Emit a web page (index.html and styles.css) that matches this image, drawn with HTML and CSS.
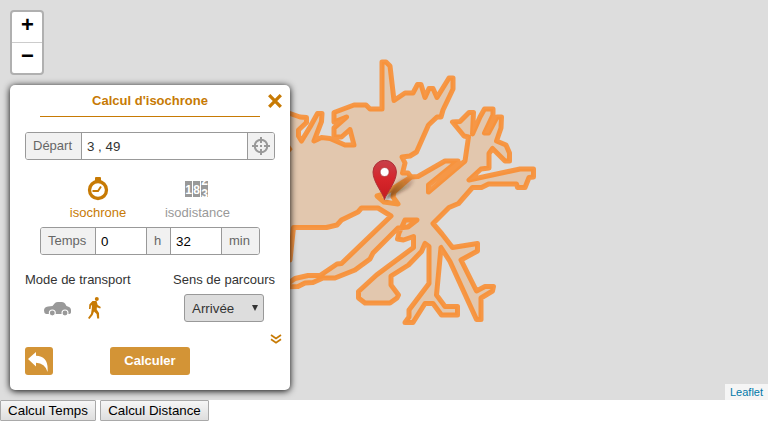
FILE: index.html
```html
<!DOCTYPE html>
<html lang="fr">
<head>
<meta charset="utf-8">
<title>Calcul d'isochrone</title>
<link rel="stylesheet" href="styles.css">
</head>
<body>
<main class="map">
  <svg class="overlay" width="768" height="400" viewBox="0 0 768 400">
    <path class="zone" d="M280 113 L290 113.500 300 117 306.500 117.500 306.500 122.500 298.500 130 298.500 136 301.500 141 310 127 317.500 113.500 322 113.500 321.500 121.500 314 141 321.500 137.500 330 138.500 345 145 354 145 350 129.500 341.500 137 334 137 334 128 346.500 117 334 122 334 112.500 354 105 366 105 370 109 382 109 382 62 386 62 390 66 394 100.500 405 93 413 93 417.500 84.500 421 84.500 425 97.500 429 88.500 433 88.500 437 97.500 449 78 453 78 453 89 443 110 441 117 437 117 428.500 125 416.500 152 410 156 402 157 405 163 402.500 173 408 173 411 177 418 176.500 445 161 458 161 428.500 185 428.500 192 465 161 468.500 137 464 136 452.500 122 460 121.500 469 112.500 473.500 112.500 472.500 134 480 117 484.500 109 493 109 493 115 484.500 133 488.500 133 497 117 501.500 117 501 128 496.500 141 506 145 509.500 153 509.500 161 505 161 492.500 148.500 489 153.500 489 168 481 169 469 180 520 169 533.500 169 533.500 177 529 177.500 525 187.500 517.500 187.500 516.500 184 488.500 184 481.500 187.500 472.500 187.500 458.500 203.500 449 207.500 433 223.500 442 234 452.500 247.500 477.500 243.500 477.500 251 461 260 476.500 291 485 286.500 493.500 286.500 492.500 291 481 298 481 319.500 476.500 319.500 450 261.500 441 247.500 436.500 295 445 306.500 457.500 306.500 457.500 315 441.500 315 433 303.500 425 303.500 413 322.500 405 322.500 409 317 409 310 429 283.500 429 246.500 425 243.500 421.500 251.500 408.500 265 391 276 391 285 398.500 295 397 298 390 303 365 303 358.500 298 358.500 291.500 376.500 275 413.500 247.500 413.500 236.500 403.500 240 397.500 239 399 233 405 220 417 220 408 227 398 228 373 253 370 259 355 270 335 278 323 278 313 282.500 305 283 298 286.500 280 287 280 282 290 282 295 278.500 308 275.500 320 275.500 337 264 341.500 263.500 391 216 378 208 361.500 208 358 212 341.500 220 337 225 326.500 227.500 293.500 227.500 290 260 280 260Z"/>
    <path class="pocket" d="M411 177 L394 192 393 197 398 204 384 202 377 196 384 194Z"/>
    <path class="edge" d="M286 144 L289.500 149 286 153"/>
  </svg>

  <svg class="marker" width="50" height="48" viewBox="0 0 50 48">
    <defs>
      <linearGradient id="pin" x1="0" y1="0" x2="0" y2="1"><stop offset="0" stop-color="#c8414a"/><stop offset=".5" stop-color="#d6252a"/><stop offset="1" stop-color="#c41b20"/></linearGradient>
      <linearGradient id="shade" x1="0" y1="1" x2="1" y2="0"><stop offset="0" stop-color="#321800" stop-opacity=".65"/><stop offset="1" stop-color="#321800" stop-opacity=".05"/></linearGradient>
      <filter id="soft" x="-30%" y="-30%" width="160%" height="160%"><feGaussianBlur stdDeviation="1.500"/></filter>
    </defs>
    <path d="M15 40 C20 29 27 20 37 17 C47 15 46 23 37 29Z" fill="url(#shade)" filter="url(#soft)"/>
    <path d="M14.500 39.500 C13 33 3 22 3 12 A11.700 11.700 0 0 1 26.400 12 C26.400 22 16.500 33 14.500 39.500Z" fill="url(#pin)" stroke="#ad3037"/>
    <circle cx="14.600" cy="12" r="4.500" fill="#fff" stroke="#a82e32" stroke-width=".7"/>
  </svg>

  <div class="zoom">
    <a class="zoom-btn">+</a>
    <a class="zoom-btn">−</a>
  </div>

  <section class="panel">
    <header class="title">Calcul d'isochrone</header>
    <svg class="close" width="14" height="14" viewBox="0 0 14 14"><path d="M1.200 1.200L12.800 12.800M12.800 1.200L1.200 12.800"/></svg>

    <div class="group start">
      <span class="tag start-tag">Départ</span>
      <span class="value start-value">3 , 49</span>
      <span class="tag locate">
        <svg width="18" height="18" viewBox="0 0 18 18"><circle cx="9" cy="9" r="6.300"/><path d="M9 0v6M9 12v6M0 9h6M12 9h6M8 9h2"/></svg>
      </span>
    </div>

    <div class="modes">
      <div class="mode on">
        <svg width="22" height="24" viewBox="0 0 22 24"><path d="M8 1Q8 0 9 0h4q1 0 1 1v3H8z" fill="#c77a04"/><circle cx="11" cy="13" r="8.500" fill="none" stroke="#c77a04" stroke-width="3.300"/><path d="M5.500 14H11L14 9.500" fill="none" stroke="#c77a04" stroke-width="1.900"/></svg>
        <span>isochrone</span>
      </div>
      <div class="mode">
        <svg class="counter" width="23" height="16" viewBox="0 0 23 16"><path d="M0 0h7v16H0zM8 0h7v16H8zM16 0h7v16h-7z" fill="#999"/><text x=".3" y="12.500">1</text><text x="8.200" y="12.500">8</text><text x="16.200" y="3.500">2</text><text x="16.200" y="17">3</text></svg>
        <span>isodistance</span>
      </div>
    </div>

    <div class="group time">
      <span class="tag time-tag">Temps</span>
      <span class="value num">0</span>
      <span class="tag hour">h</span>
      <span class="value num">32</span>
      <span class="tag min">min</span>
    </div>

    <div class="labels"><span>Mode de transport</span><span>Sens de parcours</span></div>

    <div class="options">
      <svg class="car" width="27" height="14" viewBox="0 0 27 14"><path d="M0 8.500Q0 5 4 4.500L8.500 4 11 1Q12 0 14 0h4Q20 0 21 1.500L22.500 4Q27 5 27 8v2.500Q26.500 12 25 12H2Q0 11.500 0 8.500Z" fill="#999"/><circle cx="8.300" cy="11" r="3" fill="#999" stroke="#fff" stroke-width="1.100"/><circle cx="21" cy="11" r="3" fill="#999" stroke="#fff" stroke-width="1.100"/></svg>
      <svg class="walker" width="13" height="22" viewBox="0 0 13 22"><circle cx="8.800" cy="2" r="2" fill="#c77a04"/><path d="M4.500 4L8.500 4 9.700 8 12.800 10 12.200 11.500 8.900 10.300 8.700 12.500 11 16 11.200 21.500 9.200 21.500 8.600 17 6 14.500 4.700 18 1.500 22 0 21 3 16.800 3.800 11.500 4 7.800 3 9 2.500 12 1 12 1.300 7.500Z" fill="#c77a04"/></svg>
      <div class="select"><span>Arrivée</span><svg width="6" height="6" viewBox="0 0 6 6"><path d="M0 0h6L3 6z" fill="#333"/></svg></div>
    </div>

    <div class="more"><svg width="12" height="10" viewBox="0 0 12 10"><path d="M1 1l5 3.500L11 1M1 5.200l5 3.500 5-3.500"/></svg></div>

    <footer class="actions">
      <div class="back"><svg width="20" height="20" viewBox="0 0 20 20"><path d="M0 7L8 0V3.700Q21 4 19.500 20Q17 11 8 10.800V14.500Z" fill="#fff"/></svg></div>
      <div class="submit">Calculer</div>
    </footer>
  </section>

  <div class="attribution">Leaflet</div>
</main>
<div class="bar">
  <button class="calc time-calc">Calcul Temps</button>
  <button class="calc distance-calc">Calcul Distance</button>
</div>
</body>
</html>
```
FILE: styles.css
```css
* { box-sizing: border-box; }
body { margin: 0; overflow: hidden; background: #fff; font: 13.33px/16px "Liberation Sans", Arial, sans-serif; color: #333; }
svg { display: block; flex: none; }
.map { position: relative; height: 400px; padding: 10px; background: #ddd; overflow: hidden; }
.overlay { position: absolute; left: 0; top: 0; }
.zone { fill: rgb(231, 178, 127); fill-opacity: .5; stroke: #fb8824; stroke-opacity: .82; stroke-width: 5; stroke-linejoin: round; }
.pocket { fill: #ddd; stroke: #f5963f; stroke-width: 5; stroke-linejoin: round; }
.edge { fill: none; stroke: #f08b34; stroke-width: 5; }
.marker { position: absolute; left: 370px; top: 160px; }

.zoom { width: 34px; height: 65px; border: 2px solid #b0b0b0; border-radius: 4px; background: #fff; }
.zoom-btn { display: block; height: 30px; padding-left: 1px; font: bold 22px/26px "Liberation Sans", Arial, sans-serif; color: #000; text-align: center; }
.zoom-btn:first-child { height: 31px; border-bottom: 1px solid #ccc; }

.panel { position: relative; width: 280px; height: 305px; margin-top: 10px; padding: 0 15px; border-radius: 5px; background: #fff; box-shadow: 0 1px 7px #000; }
.title { height: 32px; margin: 0 15px; border-bottom: 1px solid #c77a04; text-align: center; font: bold 13px/31px "Liberation Sans", Arial, sans-serif; color: #c77a04; }
.close { position: absolute; right: 8px; top: 9px; stroke: #c77a04; stroke-width: 3.3; }

.group { display: flex; height: 28px; border: 1px solid #999; border-radius: 3px; background: #fff; overflow: hidden; line-height: 26px; }
.group > * + * { border-left: 1px solid #999; }
.tag { background: #f1f1f1; color: #666; font-size: 13px; padding-left: 7px; }
.value { padding-left: 5px; line-height: 27px; font-size: 13.33px; }
.start { margin-top: 15px; }
.start-tag { width: 55px; }
.start-value { flex: 1; }
.locate { width: 27px; padding: 4px; }
.locate svg { fill: none; stroke: #999; stroke-width: 2; }

.modes { display: flex; margin-top: 17px; height: 50px; }
.mode { width: 85px; margin-left: 14.5px; display: flex; flex-direction: column; align-items: center; color: #999; font-size: 13px; }
.mode.on { margin-left: 30.5px; color: #c77a04; }
.mode > span { margin-top: 4px; }
.counter { margin: 4px 3px 4px 0; }
.counter text { fill: #fff; font: bold 12px "Liberation Sans", Arial, sans-serif; }

.time { width: 220px; margin: 0 0 0 15px; }
.time-tag { width: 54px; }
.num { width: 51px; color: #000; }
.hour { width: 24px; }
.min { flex: 1; }

.labels { display: flex; justify-content: space-between; margin-top: 17px; font-size: 13px; }
.options { display: flex; margin-top: 6px; }
.car { margin: 8px 0 0 19px; }
.walker { margin: 3px 0 0 17px; }
.select { display: flex; justify-content: space-between; width: 80px; height: 28px; margin-left: 83px; padding: 0 5px 0 7px; border: 1px solid #999; border-radius: 3px; background: #ddd; line-height: 27px; }
.select svg { margin-top: 10px; }
.more { height: 10px; margin: 12px 0 0 245px; }
.more svg { fill: none; stroke: #c77a04; stroke-width: 1.7; }
.actions { display: flex; gap: 57px; margin-top: 3px; }
.back, .submit { height: 28px; border-radius: 3px; background: #d39436; }
.back { width: 28px; padding: 5px 4px 3px 3px; }
.submit { width: 80px; text-align: center; color: #fff; font: bold 13px/27px "Liberation Sans", Arial, sans-serif; }

.attribution { position: absolute; right: 0; bottom: 0; width: 43px; height: 16px; padding-left: 5px; background: #f5f5f5; color: #0078a8; font-size: 11px; line-height: 16px; }
.bar { display: flex; gap: 4px; }
.calc { height: 21px; margin: 0; padding: 0; border: 1px solid #a9a9a9; border-radius: 1px; background: linear-gradient(#f6f6f6, #dedede); color: #000; font: 13.33px/19px "Liberation Sans", Arial, sans-serif; }
.time-calc { width: 96px; }
.distance-calc { width: 109px; }
```
